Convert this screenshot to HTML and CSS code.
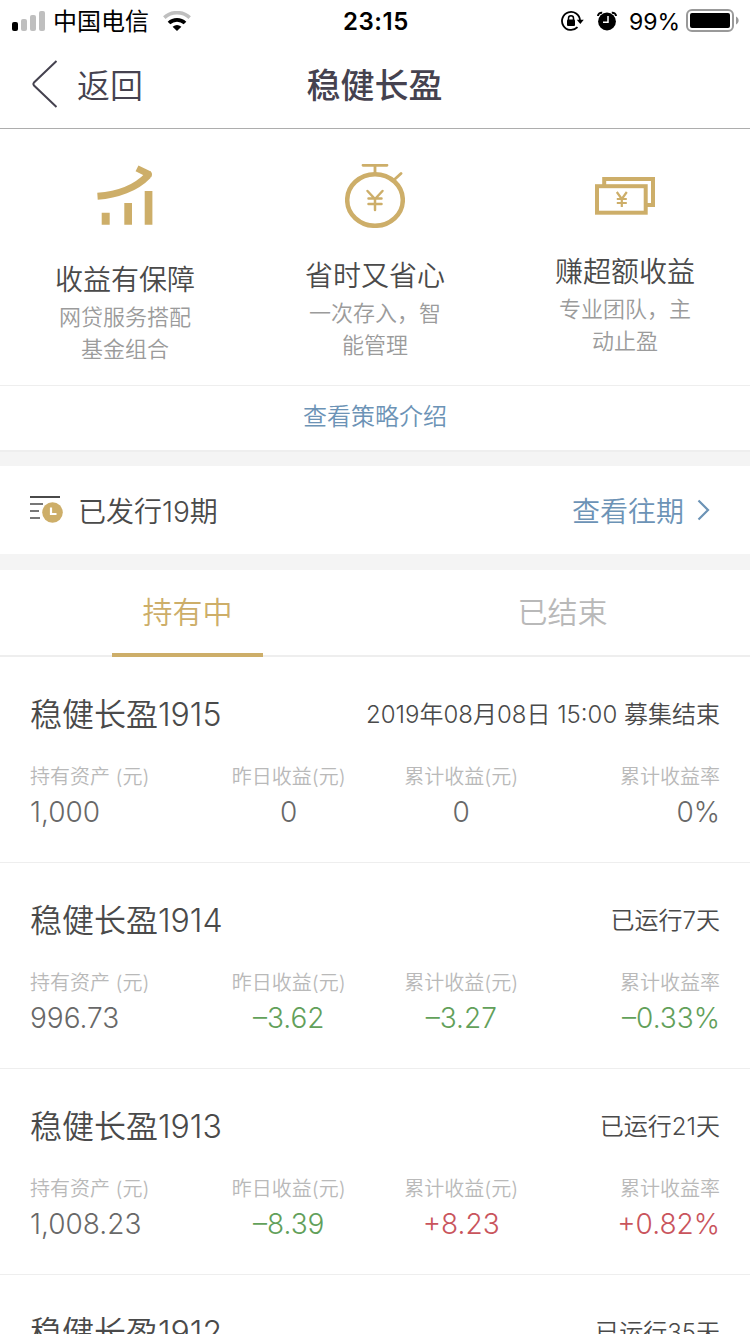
FILE: index.html
```html
<!DOCTYPE html>
<html lang="zh-CN">
<head>
  <meta charset="UTF-8" />
  <meta name="viewport" content="width=device-width, initial-scale=1.0" />
  <title>稳健长盈</title>
  <link rel="stylesheet" href="styles.css">
</head>
<body>
  <div class="status-bar">
    <div class="status-left">
      <svg class="signal" width="34" height="20" viewBox="0 0 34 20">
        <rect x="0" y="11" width="6" height="9" rx="2" fill="#000"/>
        <rect x="9" y="8" width="6" height="12" rx="2" fill="#bfbfbf"/>
        <rect x="18" y="4" width="6" height="16" rx="2" fill="#bfbfbf"/>
        <rect x="27" y="0" width="6" height="20" rx="2" fill="#bfbfbf"/>
      </svg>
      <span class="carrier">中国电信</span>
      <svg class="wifi" width="28" height="20" viewBox="0 0 28 20">
        <path d="M1.300 6.600C8.500 0 19.500 0 26.700 6.600" fill="none" stroke="#bfbfbf" stroke-width="3.600"/>
        <path d="M6 12C10.500 7.700 17.500 7.700 22 12" fill="none" stroke="#000" stroke-width="3.800"/>
        <path d="M9.600 15.800Q14 12.200 18.400 15.800L14 20Z" fill="#000"/>
      </svg>
    </div>
    <div class="status-time">23:15</div>
    <div class="status-right">
      <svg class="lock" width="23" height="20" viewBox="0 0 23 20">
        <path d="M16.500 16.200A9 9 0 1 1 19 9.500" fill="none" stroke="#000" stroke-width="1.800"/>
        <path d="M15.800 8.800H22.800L19.300 13Z" fill="#000"/>
        <rect x="6" y="8.600" width="8" height="6.400" rx="1" fill="#000"/>
        <path d="M7.500 9V7.300A2.500 2.500 0 0 1 12.500 7.300V9" fill="none" stroke="#000" stroke-width="1.500"/>
      </svg>
      <svg class="alarm" width="20" height="20" viewBox="0 0 20 20">
        <circle cx="10" cy="10.500" r="8.900" fill="#000"/>
        <path d="M1 5C1 2.900 2.800 1.600 5.200 1.800M19 5C19 2.900 17.200 1.600 14.800 1.800" fill="none" stroke="#000" stroke-width="2"/>
        <path d="M11 5V11.200H6" fill="none" stroke="#fff" stroke-width="1.500"/>
      </svg>
      <span class="percent">99%</span>
      <svg class="battery" width="54" height="24" viewBox="0 0 54 24">
        <rect x="1" y="1" width="46" height="21" rx="5" fill="none" stroke="#999" stroke-width="2"/>
        <rect x="4" y="4" width="40" height="15" rx="2" fill="#000"/>
        <path d="M50 7.500C53.500 9 53.500 14 50 15.500Z" fill="#999"/>
      </svg>
    </div>
  </div>

  <div class="nav-bar">
    <a class="back-button">
      <svg width="26" height="48" viewBox="0 0 26 48">
        <path d="M24.500 1L2 22.500Q.8 24 2 25.500L24.500 47" fill="none" stroke="#45424f" stroke-width="2"/>
      </svg>
      <span>返回</span>
    </a>
    <h1>稳健长盈</h1>
  </div>

  <div class="features">
    <div class="feature feature-profit">
      <svg width="60" height="64" viewBox="0 0 60 64">
        <path d="M2.500 34.300C22 33 41 26 53 13.500" fill="none" stroke="#cdae69" stroke-width="7"/>
        <path d="M42 6.300L54.500 12.500" fill="none" stroke="#cdae69" stroke-width="6.500"/>
        <circle cx="53.500" cy="12.500" r="3.500" fill="#cdae69"/>
        <path d="M6.700 50.700h8v12h-8zM29.300 41H37v21.700h-7.700zM49.700 29h7.700v33.700h-7.700z" fill="#cdae69"/>
      </svg>
      <h2>收益有保障</h2>
      <p>网贷服务搭配基金组合</p>
    </div>
    <div class="feature feature-time">
      <svg width="60" height="64" viewBox="0 0 60 64">
        <g fill="none" stroke="#cdae69">
          <ellipse cx="30" cy="36" rx="27.800" ry="25.800" stroke-width="4.500"/>
          <path d="M18 1.300H42M30 1.300V10M50 15L56 9.500" stroke-width="2.800" stroke-linecap="round"/>
          <path d="M22.500 27L30 35L37.500 27M30 35V46M23.500 34.500H36.500M23.500 40H36.500" stroke-width="2.500" stroke-linecap="round"/>
        </g>
      </svg>
      <h2>省时又省心</h2>
      <p>一次存入，智能管理</p>
    </div>
    <div class="feature feature-extra">
      <svg width="62" height="40" viewBox="0 0 62 40">
        <g fill="none" stroke="#cdae69">
          <path d="M10.200 8V2H59V28H53" stroke-width="4"/>
          <rect x="3" y="9.200" width="48.700" height="26.500" stroke-width="4"/>
          <path d="M22.800 15L27.800 22L32.800 15M27.800 22V30M22.800 22H32.800M22.800 26H32.800" stroke-width="2.200"/>
        </g>
      </svg>
      <h2>赚超额收益</h2>
      <p>专业团队，主动止盈</p>
    </div>
  </div>
  <a class="strategy-link">查看策略介绍</a>

  <div class="issued">
    <svg width="34" height="28" viewBox="0 0 34 28">
      <path d="M0 1H30" stroke="#4a4a4a" stroke-width="2"/>
      <path d="M0 8H13M0 15H9M0 22H10" stroke="#777" stroke-width="2"/>
      <circle cx="22.500" cy="16.500" r="10.300" fill="#cdae69"/>
      <path d="M21 11.500V18H26.500" fill="none" stroke="#fff" stroke-width="2.200"/>
    </svg>
    <span class="issued-text">已发行19期</span>
    <a class="history-link"><span>查看往期</span>
      <svg width="13" height="22" viewBox="0 0 13 22">
        <path d="M1.500 1.500L11 11L1.500 20.500" fill="none" stroke="#6c93b6" stroke-width="2.200"/>
      </svg>
    </a>
  </div>

  <div class="tabs">
    <div class="tab active"><span>持有中</span></div>
    <div class="tab"><span>已结束</span></div>
  </div>

  <div class="list">
    <div class="item">
      <div class="item-head"><h3>稳健长盈1915</h3><span>2019年08月08日 15:00 募集结束</span></div>
      <div class="item-data">
        <div><label>持有资产 (元)</label><b>1,000</b></div>
        <div><label>昨日收益(元)</label><b>0</b></div>
        <div><label>累计收益(元)</label><b>0</b></div>
        <div><label>累计收益率</label><b>0%</b></div>
      </div>
    </div>
    <div class="item">
      <div class="item-head"><h3>稳健长盈1914</h3><span>已运行7天</span></div>
      <div class="item-data">
        <div><label>持有资产 (元)</label><b>996.73</b></div>
        <div><label>昨日收益(元)</label><b class="down">–3.62</b></div>
        <div><label>累计收益(元)</label><b class="down">–3.27</b></div>
        <div><label>累计收益率</label><b class="down">–0.33%</b></div>
      </div>
    </div>
    <div class="item">
      <div class="item-head"><h3>稳健长盈1913</h3><span>已运行21天</span></div>
      <div class="item-data">
        <div><label>持有资产 (元)</label><b>1,008.23</b></div>
        <div><label>昨日收益(元)</label><b class="down">–8.39</b></div>
        <div><label>累计收益(元)</label><b class="up">+8.23</b></div>
        <div><label>累计收益率</label><b class="up">+0.82%</b></div>
      </div>
    </div>
    <div class="item">
      <div class="item-head"><h3>稳健长盈1912</h3><span>已运行35天</span></div>
    </div>
  </div>
</body>
</html>
```
FILE: styles.css
```css
* {
  box-sizing: border-box;
  margin: 0;
  padding: 0;
}

body {
  width: 750px;
  height: 1334px;
  overflow: hidden;
  background: #fff;
  color: #4a4a4a;
  font-family: Inter, "Noto Sans CJK SC", sans-serif;
  font-weight: 350;
}

svg {
  display: block;
  flex-shrink: 0;
}

.status-bar {
  display: grid;
  grid-template-columns: 1fr auto 1fr;
  align-items: center;
  height: 40px;
  padding: 0 10px 0 12px;
  color: #000;
  font-size: 24px;
  line-height: 38px;
  font-weight: 400;
}

.status-left,
.status-right {
  display: flex;
  align-items: center;
}

.status-right {
  justify-content: flex-end;
}

.carrier {
  margin: 0 14px 0 7px;
  padding-top: 3px;
}

.status-time {
  padding-top: 2px;
  font-weight: 600;
  letter-spacing: 0.6px;
}

.alarm {
  margin: 0 12px 0 13px;
}

.percent {
  margin-right: 6px;
  padding-top: 2px;
  font-size: 23px;
}

.nav-bar {
  display: grid;
  grid-template-columns: 1fr auto 1fr;
  align-items: center;
  height: 89px;
  padding: 0 33px 0 32px;
  border-bottom: 1px solid #adadad;
  color: #45424f;
}

.back-button {
  display: flex;
  align-items: center;
  gap: 19px;
  font-size: 33px;
}

h1 {
  padding-bottom: 1px;
  font-size: 34px;
  font-weight: 500;
}

.features {
  display: grid;
  grid-template-columns: repeat(3, 1fr);
  height: 257px;
  border-bottom: 1px solid #eee;
}

.feature {
  display: flex;
  flex-direction: column;
  align-items: center;
  padding-top: 35px;
}

.feature-profit {
  padding-top: 33px;
}

.feature-extra {
  padding-top: 48px;
}

.feature h2 {
  margin-top: 28px;
  font-size: 28px;
  font-weight: 350;
  line-height: 40px;
}

.feature-profit h2 {
  margin-top: 34px;
}

.feature-extra h2 {
  margin-top: 35px;
}

.feature p {
  width: 133px;
  margin-top: 1px;
  color: #9b9b9b;
  font-size: 22px;
  line-height: 32px;
  text-align: center;
}

.strategy-link {
  display: block;
  height: 66px;
  border-bottom: 2px solid #eee;
  color: #6c93b6;
  font-size: 24px;
  line-height: 61px;
  text-align: center;
}

.issued {
  display: flex;
  align-items: center;
  height: 118px;
  padding: 0 40px 0 30px;
  border-top: 14px solid #f4f4f4;
  border-bottom: 16px solid #f4f4f4;
  font-size: 28px;
}

.issued-text {
  margin-left: 14px;
}

.history-link {
  display: flex;
  align-items: center;
  gap: 13px;
  margin-left: auto;
  color: #6c93b6;
}

.history-link span {
  padding-bottom: 1px;
}

.tabs {
  display: flex;
  height: 87px;
  border-bottom: 2px solid #eee;
}

.tab {
  flex: 1;
  display: flex;
  justify-content: center;
  color: #b9b9b9;
  font-size: 30px;
  line-height: 84px;
}

.tab span {
  width: 151px;
  height: 87px;
  text-align: center;
}

.tab.active span {
  border-bottom: 4px solid #cdae69;
  color: #cdae69;
}

.list {
  height: 677px;
  overflow: hidden;
}

.item {
  height: 206px;
  padding: 31px 30px 0;
  border-bottom: 1px solid #eee;
}

.item-head {
  display: flex;
  justify-content: space-between;
  align-items: center;
  height: 48px;
  font-size: 24px;
}

h3 {
  font-size: 32px;
  font-weight: 350;
}

.item-data {
  display: grid;
  grid-template-columns: repeat(4, 1fr);
  margin-top: 26px;
  text-align: center;
}

.item-data div:first-child {
  text-align: left;
}

.item-data div:last-child {
  text-align: right;
}

.item-data label {
  display: block;
  color: #b9b9b9;
  font-size: 20px;
  line-height: 30px;
}

.item-data b {
  display: block;
  color: #686868;
  font-size: 28px;
  font-weight: 300;
  line-height: 40px;
}

.item-data .down {
  color: #62a05a;
}

.item-data .up {
  color: #c9545c;
}
```
